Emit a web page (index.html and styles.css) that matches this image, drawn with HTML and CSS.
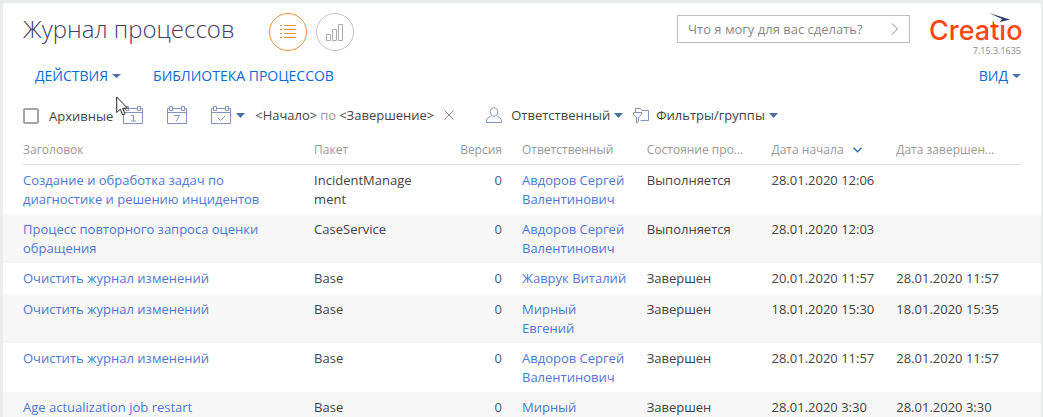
FILE: index.html
```html
<!DOCTYPE html>
<html lang="ru">
<head>
<meta charset="utf-8">
<title>Журнал процессов</title>
<link rel="stylesheet" href="styles.css">
</head>
<body>
<main class="card">
  <header class="top">
    <h1 class="title">Журнал процессов</h1>
    <div class="views">
      <button class="view view-active" type="button" aria-label="Список">
        <svg width="16" height="14" viewBox="0 0 16 14" fill="none" stroke="currentColor"><path d="M0 .5h2M4 .5h12M0 4.500h2M4 4.500h12M0 8.500h2M4 8.500h12M0 12.500h2M4 12.500h12"/></svg>
      </button>
      <button class="view" type="button" aria-label="Аналитика">
        <svg width="18" height="18" viewBox="0 0 18 18" fill="none" stroke="currentColor"><path d="M.5 11.500h4v6h-4zM6.500 6.500h4v11h-4zM12.500 1.500h4v16h-4z"/></svg>
      </button>
    </div>
    <form class="command">
      <input class="command-input" type="text" aria-label="Команда" placeholder="Что я могу для вас сделать?">
      <button class="command-go" type="button" aria-label="Выполнить">
        <svg width="8" height="12" viewBox="0 0 8 12" fill="none" stroke="currentColor"><path d="M1 .5 6.500 6 1 11.500"/></svg>
      </button>
    </form>
    <div class="brand">
      <svg class="logo" width="92" height="34" viewBox="0 0 92 34" role="img" aria-label="Creatio">
        <text class="logo-text" x="-1" y="28">Creatio</text>
        <path d="M64 5h13v7H64z" fill="#fff"/>
        <path d="M59 1 80 7.500 70 10l2-3z" fill="#2f3a66"/>
      </svg>
      <span class="version">7.15.3.1635</span>
    </div>
  </header>

  <nav class="menu">
    <button class="menu-item" type="button">ДЕЙСТВИЯ<svg class="caret" width="9" height="4" viewBox="0 0 9 4"><path d="M0 0h9L4.500 4z"/></svg></button>
    <button class="menu-item" type="button">БИБЛИОТЕКА ПРОЦЕССОВ</button>
    <button class="menu-item menu-end" type="button">ВИД<svg class="caret" width="9" height="4" viewBox="0 0 9 4"><path d="M0 0h9L4.500 4z"/></svg></button>
  </nav>

  <div class="filters">
    <label class="archive"><input class="check" type="checkbox"><span>Архивные</span></label>
    <div class="calendars">
      <button class="icon-btn" type="button" aria-label="Сегодня">
        <svg width="20" height="20" viewBox="0 0 20 20" fill="none" stroke="currentColor"><path d="M2.500 3.500h-2v15h19v-15h-2M5.500 3.500h9M.5 7.500h19M2.500 1.500h3v4h-3zM14.500 1.500h3v4h-3z"/><path d="M8 10.500h2.500v5.500M8 16h5"/></svg>
      </button>
      <button class="icon-btn" type="button" aria-label="Неделя">
        <svg width="20" height="20" viewBox="0 0 20 20" fill="none" stroke="currentColor"><path d="M2.500 3.500h-2v15h19v-15h-2M5.500 3.500h9M.5 7.500h19M2.500 1.500h3v4h-3zM14.500 1.500h3v4h-3z"/><path d="M7 10.500h5.500L9 16.500"/></svg>
      </button>
      <button class="icon-btn" type="button" aria-label="Период">
        <svg width="20" height="20" viewBox="0 0 20 20" fill="none" stroke="currentColor"><path d="M2.500 3.500h-2v15h19v-15h-2M5.500 3.500h9M.5 7.500h19M2.500 1.500h3v4h-3zM14.500 1.500h3v4h-3z"/><path d="m6.500 12.500 3 3 5-5"/></svg>
        <svg class="caret" width="9" height="5" viewBox="0 0 9 5"><path d="M0 0h9L4.500 5z"/></svg>
      </button>
    </div>
    <div class="range">
      <button class="text-btn" type="button">&lt;Начало&gt;</button>
      <span class="range-sep">по</span>
      <button class="text-btn" type="button">&lt;Завершение&gt;</button>
      <button class="icon-btn clear" type="button" aria-label="Очистить">
        <svg width="10" height="10" viewBox="0 0 10 10" fill="none" stroke="currentColor"><path d="m.5.5 9 9M9.500.5l-9 9"/></svg>
      </button>
    </div>
    <button class="text-btn owner" type="button">
      <svg class="glyph" width="16" height="17" viewBox="0 0 16 17" fill="none" stroke="currentColor"><path d="M8 .7c2.300 0 3.800 1.700 3.800 4S10.200 9.300 8 9.300 4.200 7 4.200 4.700 5.700.7 8 .7zM5.500 8.500C4.500 10.300 1.500 10 .9 12.300c-.4 1-.4 2.200-.4 3.200h15c0-1 0-2.200-.4-3.200-.6-2.300-3.600-2-4.600-3.800"/></svg>
      <span>Ответственный</span>
      <svg class="caret" width="9" height="5" viewBox="0 0 9 5"><path d="M0 0h9L4.500 5z"/></svg>
    </button>
    <button class="text-btn groups" type="button">
      <svg class="glyph" width="16" height="17" viewBox="0 0 16 17" fill="none" stroke="currentColor"><path d="M2.500 5.500v-4h5l1.500 2h6.500v10h-8M.5 5.500h8v2L5.500 10v4.500l-2 1.500v-6L.5 7.500z"/></svg>
      <span>Фильтры/группы</span>
      <svg class="caret" width="9" height="5" viewBox="0 0 9 5"><path d="M0 0h9L4.500 5z"/></svg>
    </button>
  </div>

  <table class="grid">
    <colgroup><col class="c-title"><col class="c-std"><col class="c-ver"><col class="c-std"><col class="c-std"><col class="c-std"><col class="c-std"></colgroup>
    <thead>
      <tr><th>Заголовок</th><th>Пакет</th><th class="num">Версия</th><th>Ответственный</th><th>Состояние процесса</th><th>Дата начала<svg class="sort" width="9" height="6" viewBox="0 0 9 6" fill="none" stroke="#2f74b5" stroke-width="1.500"><path d="m.5.7 4 4 4-4"/></svg></th><th>Дата завершения</th></tr>
    </thead>
    <tbody>
      <tr><td><a href="#">Создание и обработка задач по диагностике и решению инцидентов</a></td><td>IncidentManagement</td><td class="num">0</td><td><a href="#">Авдоров Сергей Валентинович</a></td><td>Выполняется</td><td>28.01.2020 12:06</td><td></td></tr>
      <tr><td><a href="#">Процесс повторного запроса оценки обращения</a></td><td>CaseService</td><td class="num">0</td><td><a href="#">Авдоров Сергей Валентинович</a></td><td>Выполняется</td><td>28.01.2020 12:03</td><td></td></tr>
      <tr><td><a href="#">Очистить журнал изменений</a></td><td>Base</td><td class="num">0</td><td><a href="#">Жаврук Виталий</a></td><td>Завершен</td><td>20.01.2020 11:57</td><td>28.01.2020 11:57</td></tr>
      <tr><td><a href="#">Очистить журнал изменений</a></td><td>Base</td><td class="num">0</td><td><a href="#">Мирный<br>Евгений</a></td><td>Завершен</td><td>18.01.2020 15:30</td><td>18.01.2020 15:35</td></tr>
      <tr><td><a href="#">Очистить журнал изменений</a></td><td>Base</td><td class="num">0</td><td><a href="#">Авдоров Сергей Валентинович</a></td><td>Завершен</td><td>28.01.2020 11:57</td><td>28.01.2020 11:57</td></tr>
      <tr><td><a href="#">Age actualization job restart</a></td><td>Base</td><td class="num">0</td><td><a href="#">Мирный</a></td><td>Завершен</td><td>28.01.2020 3:30</td><td>28.01.2020 3:30</td></tr>
    </tbody>
  </table>
</main>
<svg class="pointer" width="13" height="20" viewBox="0 0 13 20" aria-hidden="true"><path d="M.7 1v15.500l3.600-3.300 2.400 5.600 2.300-1-2.400-5.500h5z" fill="#fff" stroke="#222"/></svg>
</body>
</html>
```
FILE: styles.css
```css
* { box-sizing: border-box; }

body {
  margin: 0;
  height: 100vh;
  overflow: hidden;
  padding: 3px 2px 0 3px;
  background: #e9edec;
  font: 13px/19px "Open Sans", "Noto Sans", sans-serif;
  color: #444;
}

button {
  display: flex;
  align-items: center;
  padding: 0;
  border: 0;
  background: none;
  font: inherit;
  color: inherit;
}

svg { display: block; flex: none; }
a { color: #4f77d6; text-decoration: none; }

.card {
  min-height: 100%;
  padding: 0 20px;
  overflow: hidden;
  background: #fff;
  border-radius: 3px 3px 0 0;
}

.top { display: flex; align-items: flex-start; padding-top: 9px; }

.title {
  margin: 0;
  font-size: 24px;
  line-height: 34px;
  font-weight: 300;
  color: #444064;
}

.views { display: flex; gap: 9px; margin-left: 35px; }

.view {
  justify-content: center;
  width: 38px;
  height: 38px;
  margin-top: 1px;
  border: 1px solid #c4c4c4;
  border-radius: 50%;
  color: #aaa;
}
.view-active { border-color: #ef8e3b; color: #ef8e3b; }

.command {
  display: flex;
  align-items: center;
  width: 233px;
  height: 28px;
  margin: 3px 20px 0 auto;
  border: 1px solid #bdbdbd;
}
.command-input {
  flex: 1;
  min-width: 0;
  padding: 0 0 0 10px;
  border: 0;
  background: none;
  font: inherit;
}
.command-input::placeholder { color: #888; opacity: 1; }
.command-go { padding: 0 10px; color: #888; }

.brand { width: 91px; height: 44px; }
.logo { overflow: visible; }
.logo-text { font: 500 27px Inter, sans-serif; fill: #ff4713; }
.version {
  display: block;
  font-size: 9px;
  line-height: 10px;
  text-align: right;
  color: #888;
}

.menu {
  display: flex;
  gap: 32px;
  padding: 10px 0 0 12px;
  font-size: 14px;
  line-height: 20px;
  color: #0b69d8;
}
.menu-item { gap: 4px; }
.menu-end { margin-left: auto; }
.caret { fill: #4a6fa5; }

.filters { display: flex; align-items: center; height: 32px; margin-top: 13px; }
.archive { display: flex; align-items: center; gap: 10px; padding-top: 2px; }
.check {
  appearance: none;
  width: 16px;
  height: 16px;
  margin: 0;
  border: 2px solid #a3a3a3;
  border-radius: 2px;
}
.calendars { display: flex; gap: 24px; margin-left: 10px; }
.icon-btn { gap: 5px; color: #7f95bd; }
.range { display: flex; gap: 3px; margin-left: 10px; }
.range-sep { color: #999; }
.clear { margin-left: 7px; color: #888; }
.text-btn { gap: 4px; }
.glyph { margin-right: 5px; color: #7f95bd; }
.owner { margin-left: 32px; }
.groups { margin-left: 10px; }
.groups .glyph { margin-right: 3px; }

.grid { width: 100%; table-layout: fixed; border-collapse: separate; border-spacing: 0; }
.c-title { width: 29.17%; }
.c-std { width: 12.5%; }
.c-ver { width: 8.33%; }

th {
  height: 34px;
  padding: 4px 24px 0 0;
  border-bottom: 1px solid #dcdfdf;
  font-size: 12px;
  font-weight: 400;
  text-align: left;
  color: #999;
  white-space: nowrap;
  overflow: hidden;
  text-overflow: ellipsis;
}
td {
  height: 31px;
  padding: 6px 20px 5px 0;
  vertical-align: top;
  overflow-wrap: anywhere;
}
.num { padding-right: 20px; text-align: right; }
tbody .num { color: #4a5a75; }
.sort { display: inline-block; margin-left: 9px; vertical-align: 1px; }

tbody tr:nth-child(even) {
  background: #f7f7f7;
  box-shadow: 20px 0 #f7f7f7, -20px 0 #f7f7f7;
}

.pointer { position: absolute; left: 116px; top: 96px; }
```
